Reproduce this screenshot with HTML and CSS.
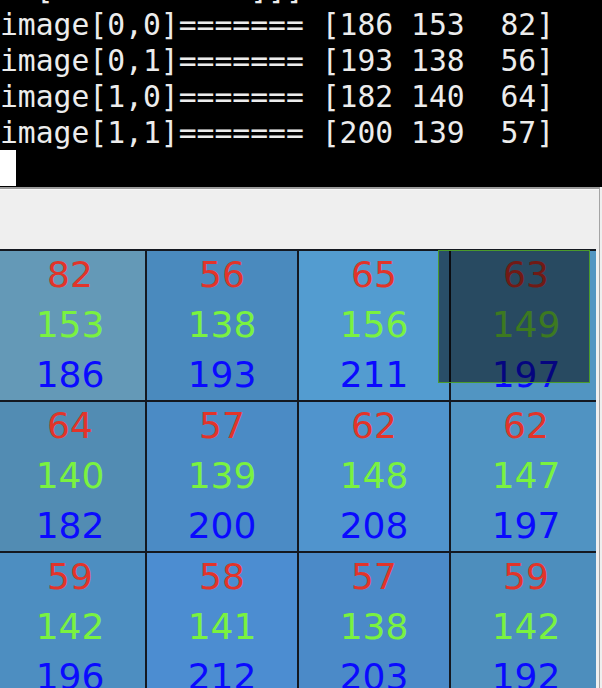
FILE: index.html
```html
<!DOCTYPE html>
<html>
<head>
<meta charset="utf-8">
<link rel="stylesheet" href="styles.css">
</head>
<body>
<div class="terminal">
<div class="tline">  [200 139  57]]]</div>
<div class="tline">image[0,0]======= [186 153  82]</div>
<div class="tline">image[0,1]======= [193 138  56]</div>
<div class="tline">image[1,0]======= [182 140  64]</div>
<div class="tline">image[1,1]======= [200 139  57]</div>
<div class="tline"><span class="cursor"></span></div>
</div>
<div class="window">
  <div class="toolbar"></div>
  <div class="viewport">
    <div class="grid">
      <div class="cell" style="background: rgb(100,153,183)"><span class="r">82</span><span class="g">153</span><span class="b">186</span></div>
      <div class="cell" style="background: rgb(74,138,190)"><span class="r">56</span><span class="g">138</span><span class="b">193</span></div>
      <div class="cell" style="background: rgb(83,156,208)"><span class="r">65</span><span class="g">156</span><span class="b">211</span></div>
      <div class="cell" style="background: rgb(81,149,194)"><span class="r">63</span><span class="g">149</span><span class="b">197</span></div>
      <div class="cell" style="background: rgb(82,140,179)"><span class="r">64</span><span class="g">140</span><span class="b">182</span></div>
      <div class="cell" style="background: rgb(75,139,197)"><span class="r">57</span><span class="g">139</span><span class="b">200</span></div>
      <div class="cell" style="background: rgb(80,148,205)"><span class="r">62</span><span class="g">148</span><span class="b">208</span></div>
      <div class="cell" style="background: rgb(80,147,194)"><span class="r">62</span><span class="g">147</span><span class="b">197</span></div>
      <div class="cell" style="background: rgb(77,142,193)"><span class="r">59</span><span class="g">142</span><span class="b">196</span></div>
      <div class="cell" style="background: rgb(76,141,209)"><span class="r">58</span><span class="g">141</span><span class="b">212</span></div>
      <div class="cell" style="background: rgb(75,138,200)"><span class="r">57</span><span class="g">138</span><span class="b">203</span></div>
      <div class="cell" style="background: rgb(77,142,189)"><span class="r">59</span><span class="g">142</span><span class="b">192</span></div>
      <div class="selection"></div>
    </div>
  </div>
</div>
</body>
</html>
```

FILE: styles.css
```css
html, body {
  margin: 0;
  padding: 0;
}
body {
  width: 602px;
  height: 688px;
  overflow: hidden;
  background: #efefef;
}
.terminal {
  height: 187px;
  background: #000;
  color: #ececec;
  font-family: "DejaVu Sans Mono", monospace;
  font-size: 29.7px;
  line-height: 36px;
  display: flex;
  flex-direction: column;
  justify-content: flex-end;
  overflow: hidden;
}
.tline {
  white-space: pre;
  height: 36px;
  flex: none;
  padding-top: 1px;
  box-sizing: border-box;
}
.tline:last-child {
  padding-top: 0;
  margin-bottom: 1px;
}
.cursor {
  display: inline-block;
  width: 16px;
  height: 36px;
  background: #fff;
  vertical-align: top;
}
.window {
  width: 599px;
  border-top: 2px solid #9c9c9c;
  border-right: 1px solid #a4a4a4;
  background: #efefef;
  box-shadow: inset 0 1px 0 #fafafa;
}
.toolbar {
  height: 60px;
}
.viewport {
  width: 596px;
  height: 500px;
  overflow: hidden;
}
.grid {
  position: relative;
  margin-left: -5px;
  display: grid;
  grid-template-columns: repeat(4, 150px);
  grid-template-rows: repeat(3, 149px);
  gap: 2px;
  padding-top: 2px;
  width: 606px;
  background: #141820;
}
.cell {
  display: flex;
  flex-direction: column;
  align-items: center;
  justify-content: center;
  font-family: "DejaVu Sans", sans-serif;
  font-size: 36px;
  line-height: 50px;
  padding-bottom: 2px;
  box-sizing: border-box;
}
.r { color: #e2342a; }
.g { color: #7af240; }
.b { color: #0a0aff; }
.selection {
  position: absolute;
  left: 443px;
  top: 1px;
  width: 150px;
  height: 131px;
  border: 1px solid #4a9a2c;
  background: rgba(0, 0, 0, 0.5);
}
```
